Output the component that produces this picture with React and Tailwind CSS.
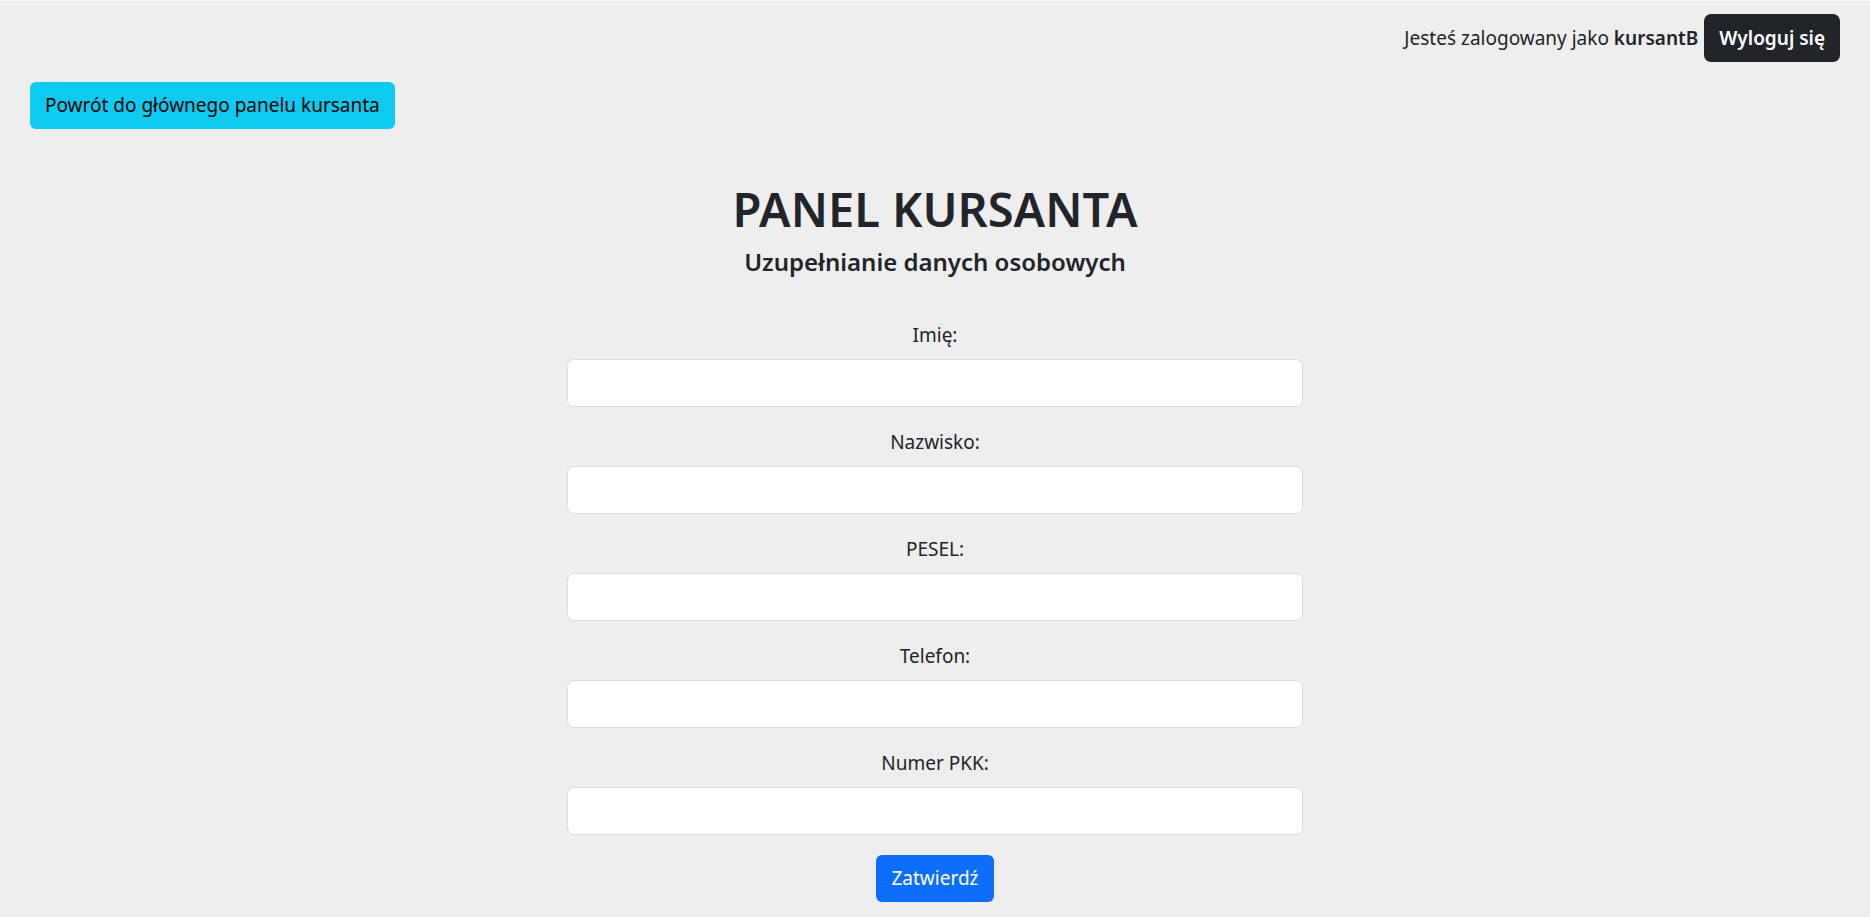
const fields = ["Imię:", "Nazwisko:", "PESEL:", "Telefon:", "Numer PKK:"];

const font = { fontFamily: "'Noto Sans', 'DejaVu Sans', sans-serif" };

export default function App() {
  return (
    <div className="min-h-[917px] border-t border-[#f6f6f6] bg-[#eeeeee] text-[19px] text-[#212529]" style={font}>
      <header className="flex items-center justify-end gap-[6px] pr-[30px] pt-[13px]">
        <span>
          Jesteś zalogowany jako <span className="font-semibold">kursantB</span>
        </span>
        <button className="h-[48px] rounded-[7px] bg-[#212529] px-[15px] font-semibold text-white">Wyloguj się</button>
      </header>

      <div className="px-[30px] pt-[20px]">
        <button className="h-[47px] rounded-[6px] bg-[#0dcaf0] px-[15px] text-black">Powrót do głównego panelu kursanta</button>
      </div>

      <main className="flex flex-col items-center pt-[50px]">
        <h1 className="text-[47px] font-semibold leading-[60px]">PANEL KURSANTA</h1>
        <h2 className="mt-[8px] text-[24px] font-semibold leading-[30px]">Uzupełnianie danych osobowych</h2>

        <form className="mt-[23px] flex w-[736px] flex-col items-center" onSubmit={(e) => e.preventDefault()}>
          {fields.map((label) => (
            <div key={label} className="flex w-full flex-col items-center">
              <label className="mt-[20px] leading-[30px]">{label}</label>
              <input className="mt-[9px] h-[48px] w-full rounded-[7px] border border-[#dadce0] bg-white px-3 outline-none" />
            </div>
          ))}
          <button className="mt-[20px] h-[47px] rounded-[6px] bg-[#0d6efd] px-[15px] text-white">Zatwierdź</button>
        </form>
      </main>
    </div>
  );
}
